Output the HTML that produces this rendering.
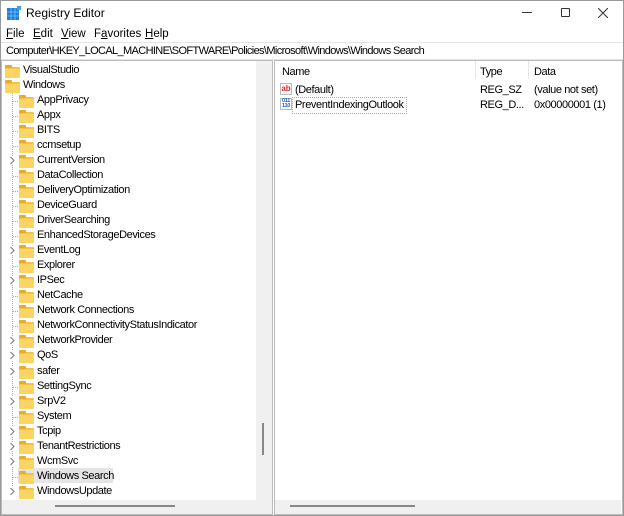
<!DOCTYPE html>
<html><head><meta charset="utf-8"><style>
*{margin:0;padding:0;box-sizing:border-box}
body{width:624px;height:516px;background:#f3f3f3;font-family:"Liberation Sans",sans-serif;font-size:11px;color:#000;position:relative;overflow:hidden}
.abs{position:absolute}
.t{position:absolute;white-space:nowrap;line-height:15px}
.tr{letter-spacing:-0.4px}
.fold{position:absolute;width:15px;height:11px;background:#f6c343;border-radius:1px}
.fold:before{content:"";position:absolute;left:0;top:-2px;width:7px;height:3px;background:#e8ab2a;border-radius:1px 1px 0 0}
.fold:after{content:"";position:absolute;left:0;top:2px;width:15px;height:9px;background:#fcd462;border-radius:1px}
</style></head><body>
<div class="abs" style="left:0;top:0;width:624px;height:516px;background:#fff;border:1px solid #999"></div>
<div class="abs" style="left:1px;top:1px;width:622px;height:42px;background:#fff"></div>
<svg class="abs" style="left:7px;top:6px" width="14" height="14" viewBox="0 0 14 14"><rect x="0" y="2" width="12" height="12" fill="#1b80d8"/><g stroke="#8cc6f5" stroke-width="0.7"><line x1="4" y1="2" x2="4" y2="14"/><line x1="8" y1="2" x2="8" y2="14"/><line x1="0" y1="6" x2="12" y2="6"/><line x1="0" y1="10" x2="12" y2="10"/></g><rect x="10" y="0" width="4" height="4" fill="#3da3f0"/></svg>
<div class="t" style="left:26px;top:6px;font-size:12px">Registry Editor</div>
<div class="abs" style="left:522px;top:12px;width:10px;height:1px;background:#333"></div>
<div class="abs" style="left:561px;top:8px;width:9px;height:9px;border:1px solid #333;border-radius:1px"></div>
<svg class="abs" style="left:598px;top:8px" width="10" height="10"><path d="M0 0L10 10M10 0L0 10" stroke="#333" stroke-width="1"/></svg>
<div class="t" style="left:6px;top:27px;font-size:11.5px"><u>F</u>ile</div>
<div class="t" style="left:33px;top:27px;font-size:11.5px"><u>E</u>dit</div>
<div class="t" style="left:61px;top:27px;font-size:11.5px"><u>V</u>iew</div>
<div class="t" style="left:94px;top:27px;font-size:11.5px">F<u>a</u>vorites</div>
<div class="t" style="left:145px;top:27px;font-size:11.5px"><u>H</u>elp</div>
<div class="abs" style="left:1px;top:42px;width:622px;height:18px;background:#fff;border-top:1px solid #e5e5e5;border-bottom:1px solid #e5e5e5"></div>
<div class="t" style="left:6px;top:44px;font-size:11px;letter-spacing:-0.63px">Computer\HKEY_LOCAL_MACHINE\SOFTWARE\Policies\Microsoft\Windows\Windows Search</div>
<div class="abs" style="left:1px;top:60px;width:272px;height:455px;background:#fff;border:1px solid #bbb"></div>
<div class="abs" style="left:256px;top:61px;width:16px;height:440px;background:#f0f0f0"></div>
<div class="abs" style="left:262px;top:423px;width:2px;height:32px;background:#888"></div>
<div class="abs" style="left:2px;top:500px;width:270px;height:14px;background:#f0f0f0"></div>
<div class="abs" style="left:55px;top:505px;width:120px;height:2px;background:#888"></div>
<div class="abs" style="left:12px;top:92px;height:402px;border-left:1px dotted #aaa"></div>
<div class="abs" style="left:18px;top:468px;width:95px;height:15px;background:#e5e5e5"></div>
<div id="tree"></div>
<div class="abs" style="left:274px;top:60px;width:349px;height:455px;background:#fff;border:1px solid #bbb"></div>
<div class="abs" style="left:275px;top:500px;width:346px;height:14px;background:#f0f0f0"></div>
<div class="abs" style="left:290px;top:505px;width:125px;height:2px;background:#888"></div>
<div class="abs" style="left:475px;top:61px;width:1px;height:18px;background:#e5e5e5"></div>
<div class="abs" style="left:528px;top:61px;width:1px;height:18px;background:#e5e5e5"></div>
<div class="t tr" style="left:282px;top:65px">Name</div>
<div class="t tr" style="left:480px;top:65px">Type</div>
<div class="t tr" style="left:534px;top:65px">Data</div>
<div class="abs" style="left:280px;top:83px;width:12px;height:12px;border:1px solid #bbb;background:#fff;color:#d22;font-size:8px;font-weight:bold;line-height:9px;text-align:center">ab</div>
<div class="t tr" style="left:295px;top:83px">(Default)</div>
<div class="t tr" style="left:480px;top:83px">REG_SZ</div>
<div class="t tr" style="left:534px;top:83px">(value not set)</div>
<div class="abs" style="left:280px;top:98px;width:12px;height:12px;border:1px solid #bbb;background:#fff;color:#1a5bc7;font-size:5.5px;font-weight:bold;line-height:5px;text-align:center;letter-spacing:-0.3px">011<br>110</div>
<div class="abs" style="left:292px;top:97px;width:115px;height:17px;border:1px dotted #aaa"></div>
<div class="t tr" style="left:295px;top:98px">PreventIndexingOutlook</div>
<div class="t tr" style="left:480px;top:98px">REG_D...</div>
<div class="t tr" style="left:534px;top:98px">0x00000001 (1)</div>
<script>
var items=[["VisualStudio",0,0],["Windows",0,0],["AppPrivacy",1,0],["Appx",1,0],["BITS",1,0],["ccmsetup",1,0],["CurrentVersion",1,1],["DataCollection",1,0],["DeliveryOptimization",1,0],["DeviceGuard",1,0],["DriverSearching",1,0],["EnhancedStorageDevices",1,0],["EventLog",1,1],["Explorer",1,0],["IPSec",1,1],["NetCache",1,0],["Network Connections",1,0],["NetworkConnectivityStatusIndicator",1,0],["NetworkProvider",1,1],["QoS",1,1],["safer",1,1],["SettingSync",1,0],["SrpV2",1,1],["System",1,0],["Tcpip",1,1],["TenantRestrictions",1,1],["WcmSvc",1,1],["Windows Search",1,0],["WindowsUpdate",1,1]];
var h="";
items.forEach(function(it,i){var y=62.5+i*15.05;
if(it[1]){h+='<div class="fold" style="left:19px;top:'+(y+4)+'px"></div><div class="t tr" style="left:37px;top:'+y+'px">'+it[0]+'</div>';
if(it[2])h+='<svg class="abs" style="left:8px;top:'+(y+3)+'px;background:#fff" width="8" height="9"><path d="M2.5 1L6 4.5L2.5 8" fill="none" stroke="#777" stroke-width="1"/></svg>';
else h+='<div class="abs" style="left:13px;top:'+(y+8)+'px;width:5px;border-top:1px dotted #aaa"></div>';}
else h+='<div class="fold" style="left:5px;top:'+(y+4)+'px"></div><div class="t tr" style="left:23px;top:'+y+'px">'+it[0]+'</div>';});
document.getElementById("tree").innerHTML=h;
</script>
</body></html>
